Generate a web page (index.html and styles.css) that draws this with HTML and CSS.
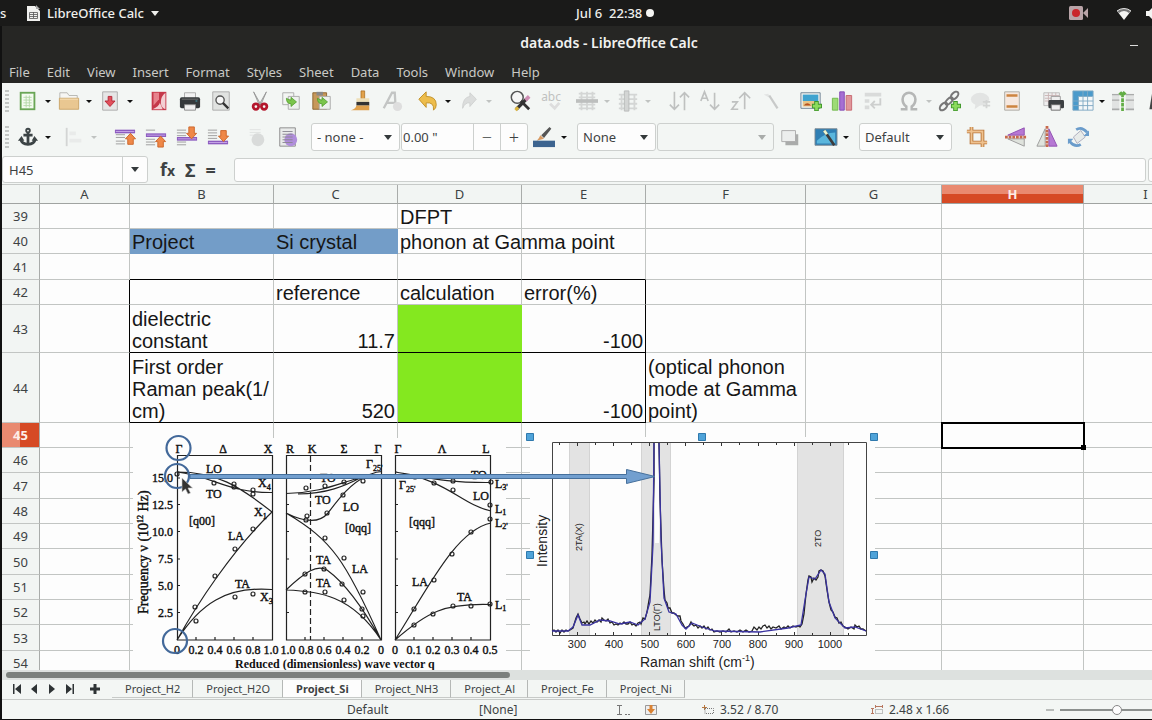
FILE: index.html
```html
<!DOCTYPE html>
<html lang="en">
<head>
<meta charset="utf-8">
<title>data.ods - LibreOffice Calc</title>
<link rel="stylesheet" href="styles.css">
</head>
<body>
<header class="topbar">
  <div class="topbar-left">
    <span class="activities">s</span>
    <button class="app-menu">
      <svg width="13" height="16" viewBox="0 0 13 16"><path d="M0 1h8l5 5v10H0z" fill="#f1f1ef"/><path d="M9 0l4 4h-4z" fill="#aaa"/><path d="M2.500 7.500h8v6h-8zM2.500 9.500h8M2.500 11.500h8M6.500 7v6" fill="none" stroke="#555" stroke-width=".8"/></svg>
      <span>LibreOffice Calc</span><i class="caret caret-light"></i>
    </button>
  </div>
  <button class="clock"><span>Jul 6&nbsp; 22:38</span><i class="dot"></i></button>
  <div class="tray">
    <svg class="cam" width="20" height="14" viewBox="0 0 20 14"><rect width="14" height="14" rx="1.500" fill="#b9a4a8"/><path d="M14 7l5-5v10z" fill="#b9a4a8"/><circle cx="7" cy="7" r="4" fill="#c9252b"/></svg>
    <svg width="16" height="13" viewBox="0 0 16 13"><path d="M8 13L1 4a11 11 0 0 1 14 0z" fill="#f4f4f2"/><path d="M1 4a11 11 0 0 1 14 0l-2 2a8 8 0 0 0-10 0z" fill="#777"/><path d="M1 4a11 11 0 0 1 14 0" fill="none" stroke="#ddd"/></svg>
    <svg width="16" height="13" viewBox="0 0 16 13"><path d="M0 4h3l4-4v13l-4-4H0z" fill="#f4f4f2"/><path d="M9 4q2 2.500 0 5M11 2q4 4.500 0 9" fill="none" stroke="#999"/></svg>
  </div>
</header>

<div class="window">
<div class="titlebar"><h1>data.ods - LibreOffice Calc</h1><button class="minimize" aria-label="Minimize"></button></div>
<nav class="menubar">
  <button>File</button><button>Edit</button><button>View</button><button>Insert</button><button>Format</button><button>Styles</button><button>Sheet</button><button>Data</button><button>Tools</button><button>Window</button><button>Help</button>
</nav>

<div class="toolbar">
  <i class="grip"></i>
  <div class="group first">
    <button class="tool" aria-label="New"><svg viewBox="0 0 24 24"><path d="M3 2h17v20H3z" fill="#6aa656"/><path d="M5 4h13v16H5z" fill="#f4fbf0"/><path d="M7 8h9M7 11h9M7 14h9M7 17h9M10 6v13M13.500 6v13" stroke="#b5d8a8"/></svg></button><button class="drop" aria-label="New options"></button>
    <button class="tool" aria-label="Open"><svg viewBox="0 0 24 24"><path d="M2 3h8l2 3h9v5H2z" fill="#f6f6f4" stroke="#b5b5b0"/><path d="M1.500 9h21v12h-21z" fill="#e9c791" stroke="#c9a468"/><path d="M2 10h20" stroke="#f7e1bb"/></svg></button><button class="drop" aria-label="Open options"></button>
    <button class="tool" aria-label="Save"><svg viewBox="0 0 24 24"><path d="M4 2h16v20H4z" fill="#e6e6e6" stroke="#aaa"/><path d="M10 7h4v5h3.500L12 18l-5.500-6H10z" fill="#e2505c" stroke="#b52737"/></svg></button><button class="drop" aria-label="Save options"></button>
  </div>
  <div class="group">
    <button class="tool" aria-label="Export as PDF"><svg viewBox="0 0 24 24"><path d="M4 2h16v20H4z" fill="#c5384a"/><path d="M6 3h6v7l-6 7z" fill="#e7828c"/><path d="M19 3v18q-5-2-5-8 0-6 5-10zM5 21q7-3 8-7l3 7z" fill="#f3cfd3"/></svg></button>
    <button class="tool" aria-label="Print"><svg viewBox="0 0 24 24"><path d="M6 3h12v8H6z" fill="#f2f2f2" stroke="#aaa"/><rect x="1" y="8" width="22" height="12" rx="2" fill="#34383a"/><path d="M3 10h18" stroke="#777"/><path d="M6 16h12v6H6z" fill="#eee" stroke="#888"/><path d="M18 12h2" stroke="#4ab"/></svg></button>
    <button class="tool" aria-label="Print Preview"><svg viewBox="0 0 24 24"><path d="M3 2h18v20H3z" fill="#e1e3e1" stroke="#aaa"/><circle cx="11" cy="11" r="4.500" fill="#f7f7f7" stroke="#555" stroke-width="1.500"/><path d="M14 14l6 6" stroke="#333" stroke-width="2.500"/></svg></button>
  </div>
  <div class="group">
    <button class="tool" aria-label="Cut"><svg viewBox="0 0 24 24"><path d="M5 2l8 14h-2zM19 2l-8 14h2z" fill="#d3d6d4" stroke="#888" stroke-width=".8"/><circle cx="7.500" cy="18" r="3" fill="none" stroke="#b4162c" stroke-width="3"/><circle cx="16.500" cy="18" r="3" fill="none" stroke="#b4162c" stroke-width="3"/></svg></button>
    <button class="tool" aria-label="Copy"><svg viewBox="0 0 24 24"><path d="M3 3h12v13H3z" fill="#f3f5f3" stroke="#aaa"/><path d="M9 7h12v14H9z" fill="#eef1ee" stroke="#aaa"/><path d="M7 9q0 6 5 6v3l6-5-6-5v3q-2 0-5-2z" fill="#7bc54c" stroke="#4c9a28" stroke-width=".8"/></svg></button>
    <button class="tool" aria-label="Paste"><svg viewBox="0 0 24 24"><path d="M2 3h15v18H2z" fill="#c7985a" stroke="#8a632d"/><path d="M6 2h7v4H6z" fill="#888"/><path d="M9 7h12v14H9z" fill="#eef1ee" stroke="#aaa"/><path d="M7 9q0 6 5 6v3l6-5-6-5v3q-2 0-5-2z" fill="#7bc54c" stroke="#4c9a28" stroke-width=".8"/></svg></button>
  </div>
  <div class="group">
    <button class="tool" aria-label="Clone Formatting"><svg viewBox="0 0 24 24"><path d="M12 1h4v9h-4z" fill="#e2a24b" stroke="#a76b1d" stroke-width=".8"/><path d="M7 9h14v4H7z" fill="#eedfb8"/><path d="M7 13h14v4H7z" fill="#333"/><path d="M7 17h14v5H1q5-1 6-5z" fill="#dfa04c"/></svg></button>
    <button class="tool" aria-label="Clear Direct Formatting" disabled><svg viewBox="0 0 24 24"><path d="M3 20L12 3h3l1 17M7 14h9" fill="none" stroke="#c3c5c4" stroke-width="2.500"/><circle cx="18" cy="18" r="5" fill="#dedede"/></svg></button>
  </div>
  <div class="group near">
    <button class="tool" aria-label="Undo"><svg viewBox="0 0 24 24"><path d="M2 10l8-8v5q11 0 11 9 0 4-3 6 1-9-8-8v5z" fill="#edbd4c" stroke="#c08e24"/></svg></button><button class="drop" aria-label="Undo options"></button>
    <button class="tool" aria-label="Redo" disabled><svg viewBox="0 0 24 24"><path d="M20 10l-7-7v4Q5 8 5 20q3-7 8-6v4z" fill="#dbdddc" stroke="#cfd1d0"/></svg></button><button class="drop off" aria-label="Redo options"></button>
  </div>
  <div class="group far">
    <button class="tool" aria-label="Find and Replace"><svg viewBox="0 0 24 24"><circle cx="9" cy="8" r="6.500" fill="#f6f6f6" stroke="#555" stroke-width="1.600"/><path d="M13 12l9 9" stroke="#333" stroke-width="3"/><path d="M8 21L19 10" stroke="#333" stroke-width="3.500"/><path d="M18 11l4-4" stroke="#cf8fb5" stroke-width="4"/><path d="M7 22l3-3" stroke="#dcb43c" stroke-width="3.500"/></svg></button>
    <button class="tool" aria-label="Spelling" disabled><svg viewBox="0 0 24 24"><text class="abc" x="12" y="12" text-anchor="middle">abc</text><path d="M11 15l5 5 5-6" fill="none" stroke="#ddd" stroke-width="3"/></svg></button>
  </div>
  <div class="group near">
    <button class="tool" aria-label="Row" disabled><svg viewBox="0 0 24 24"><path d="M3 4h18M3 8h18M3 16h18M3 20h18M6 2v20M12 2v20M18 2v20" stroke="#d4d6d5" stroke-width="2"/><path d="M0 10h24v4H0z" fill="#bdbfbe"/></svg></button><button class="drop off" aria-label="Row options"></button>
    <button class="tool" aria-label="Column" disabled><svg viewBox="0 0 24 24"><path d="M2 5h20M2 10h20M2 15h20M2 20h20M5 4v18M19 4v18" stroke="#d4d6d5" stroke-width="2"/><path d="M8 1h5v22H8z" fill="#d3d5d4" stroke="#b8bab9"/></svg></button><button class="drop off" aria-label="Column options"></button>
  </div>
  <div class="group far">
    <button class="tool" aria-label="Sort" disabled><svg viewBox="0 0 24 24"><path d="M7 2v19M2 16l5 5 5-5M18 22V3M13 8l5-5 5 5" fill="none" stroke="#bfc1c0" stroke-width="1.800"/></svg></button>
    <button class="tool" aria-label="Sort Ascending" disabled><svg viewBox="0 0 24 24"><path d="M2 12l4-10 4 10M3 9h6M17 3v18M12 16l5 5 5-5" fill="none" stroke="#bfc1c0" stroke-width="1.800"/></svg></button>
    <button class="tool" aria-label="Sort Descending" disabled><svg viewBox="0 0 24 24"><path d="M2 13h6l-6 8h7M16 21V3M10 9l6-6 6 6" fill="none" stroke="#bfc1c0" stroke-width="1.800"/></svg></button>
    <button class="tool" aria-label="AutoFilter" disabled><svg viewBox="0 0 24 24"><path d="M3 5l5-1 2 5z" fill="#e3e5e4"/><path d="M9 6l9 14" stroke="#c8cac9" stroke-width="2.500"/></svg></button>
  </div>
  <div class="group">
    <button class="tool" aria-label="Image"><svg viewBox="0 0 24 24"><path d="M1 3h21v17H1z" fill="#f3f3ef" stroke="#6a7f92"/><path d="M3 5h17v7H3z" fill="#3fa3cf"/><path d="M3 12h17v6H3z" fill="#e6c387"/><path d="M4 17q4-5 8 0z" fill="#b6521f"/><path d="M18 12v11M13 17.500h11" stroke="#3f962b" stroke-width="5"/><path d="M18 13v9M14 17.500h9" stroke="#8bdb5c" stroke-width="3"/></svg></button>
    <button class="tool" aria-label="Chart"><svg viewBox="0 0 24 24"><path d="M1.500 9h6v13h-6z" fill="#9ddb76" stroke="#6fb849"/><path d="M9.500 2h5v20h-5z" fill="#a66fd3" stroke="#8148b4"/><path d="M16.500 6h6v16h-6z" fill="#e0969a" stroke="#c6666f"/></svg></button>
    <button class="tool" aria-label="Pivot Table" disabled><svg viewBox="0 0 24 24"><path d="M3 3h18v4H3zM3 10h5v4H3zM3 17h5v4H3z" fill="#d9dbda"/><path d="M20 9v7h-9M14 12l-4 4 4 4" fill="none" stroke="#cdcfce" stroke-width="2"/></svg></button>
  </div>
  <div class="group near">
    <button class="tool" aria-label="Special Character"><svg viewBox="0 0 24 24"><path d="M3 21h6v-3q-4-3-4-8a7 7 0 0 1 14 0q0 5-4 8v3h6" fill="none" stroke="#b5b7b6" stroke-width="2.800"/></svg></button><button class="drop off" aria-label="Special Character options"></button>
    <button class="tool" aria-label="Hyperlink"><svg viewBox="0 0 24 24"><g fill="none" stroke="#777" stroke-width="2.200"><ellipse cx="17" cy="6" rx="5" ry="3" transform="rotate(-45 17 6)"/><ellipse cx="11" cy="12" rx="5" ry="2.500" transform="rotate(-45 11 12)"/><ellipse cx="5" cy="18" rx="5" ry="3" transform="rotate(-45 5 18)"/></g><path d="M18 12v11M13 17.500h11" stroke="#3f962b" stroke-width="5"/><path d="M18 13v9M14 17.500h9" stroke="#8bdb5c" stroke-width="3"/></svg></button>
    <button class="tool" aria-label="Comment" disabled><svg viewBox="0 0 24 24"><ellipse cx="11" cy="10" rx="10" ry="7" fill="#e2e4e3"/><path d="M6 15l-1 6 7-5z" fill="#e2e4e3"/><path d="M14 13h8M14 17h8M18 11v9" stroke="#d3d5d4" stroke-width="2"/></svg></button>
    <button class="tool" aria-label="Headers and Footers"><svg viewBox="0 0 24 24"><path d="M4 2h16v20H4z" fill="#f6e8df" stroke="#a8a8a2"/><path d="M6 6h12M6 18h12" stroke="#cd8440" stroke-width="2.500"/></svg></button>
  </div>
  <div class="group far">
    <button class="tool" aria-label="Define Print Area"><svg viewBox="0 0 24 24"><path d="M2 3h17v14H2z" fill="#eee" stroke="#bbb"/><path d="M3 6h16M3 9h16M3 12h16M7 3v14M11 3v14M15 3v14" stroke="#c9b5b5"/><path d="M10 7h10v6H10z" fill="#eee" stroke="#999"/><rect x="7" y="11" width="17" height="9" rx="1.500" fill="#3c4042"/><path d="M10 16h10v6H10z" fill="#eee" stroke="#666"/></svg></button>
    <button class="tool slim" aria-label="Freeze Rows and Columns"><svg viewBox="0 0 24 24"><path d="M1 1h22v21H1z" fill="#f4f7f9"/><path d="M1 1h22v6H7v15H1z" fill="#4a9acb"/><path d="M1 12h22M1 17h22M12 1v21M17 1v21M1 1h22v21H1zM7 7h15M7 7v15" fill="none" stroke="#7fa8c3"/></svg></button><button class="drop" aria-label="Freeze options"></button>
    <button class="tool" aria-label="Split Window"><svg viewBox="0 0 24 24"><path d="M0 4h8v19H0zM15 4h9v19h-9z" fill="#e1e3e2"/><path d="M0 5h8M0 11h8M0 21h8M15 5h9M15 11h9M15 21h9" stroke="#aaacab" stroke-width="1.500"/><path d="M11.500 23V4M8 5l3.500-3L15 5" fill="none" stroke="#62ad45" stroke-width="3" stroke-dasharray="4 1"/></svg></button>
    <button class="tool" aria-label="Draw Functions"><svg viewBox="0 0 24 24"><path d="M7 21L10 3h9v18z" fill="#444"/></svg></button>
  </div>
</div>

<div class="toolbar">
  <i class="grip"></i>
  <div class="group first">
    <button class="tool" aria-label="Anchor"><svg viewBox="0 0 24 24"><circle cx="12" cy="5" r="2" fill="none" stroke="#3c4446" stroke-width="2"/><path d="M12 7v14M7 10h10M4 14q1 6 8 6t8-6" fill="none" stroke="#3c4446" stroke-width="3"/><path d="M1 16l4-5 3 5zM16 16l3-5 4 5z" fill="#3c4446"/></svg></button><button class="drop" aria-label="Anchor options"></button>
  </div>
  <div class="group near">
    <button class="tool" aria-label="Align" disabled><svg viewBox="0 0 24 24"><path d="M4 2v20" stroke="#d3d5d4" stroke-width="2"/><path d="M7 6h7v4H7zM7 14h13v4H7z" fill="#e9ebea"/></svg></button><button class="drop off" aria-label="Align options"></button>
  </div>
  <div class="group far">
    <button class="tool" aria-label="Bring to Front"><svg viewBox="0 0 24 24"><path d="M2 9.500h10M2 12.500h10M2 16.500h10M2 19.500h10" stroke="#999"/><path d="M1 4h22v4H1z" fill="#8c5cc0"/><path d="M2 6h20" stroke="#c9a9e8"/><path d="M18 8l5.500 6H21v6h-6v-6h-2.500z" fill="#ef8848" stroke="#cc6528"/></svg></button>
    <button class="tool" aria-label="Forward One"><svg viewBox="0 0 24 24"><path d="M1 4.500h10M1 14.500h10M1 17.500h10M1 20.500h10" stroke="#999"/><path d="M1 8h22v4H1z" fill="#8c5cc0"/><path d="M2 10h20" stroke="#c9a9e8"/><path d="M17 11l5.500 6H20v6h-6v-6h-2.500z" fill="#ef8848" stroke="#cc6528"/></svg></button>
    <button class="tool" aria-label="Back One"><svg viewBox="0 0 24 24"><path d="M1 4.500h10M1 7.500h10M1 10.500h10M1 17.500h10M1 20.500h10" stroke="#999"/><path d="M1 12h22v4H1z" fill="#8c5cc0"/><path d="M2 14h20" stroke="#c9a9e8"/><path d="M17 14l5.500-6H20V1h-6v7h-2.500z" fill="#ef8848" stroke="#cc6528"/></svg></button>
    <button class="tool" aria-label="Send to Back"><svg viewBox="0 0 24 24"><path d="M1 4.500h10M1 7.500h10M1 10.500h10M1 13.500h10" stroke="#999"/><path d="M1 16h22v4H1z" fill="#8c5cc0"/><path d="M2 18h20" stroke="#c9a9e8"/><path d="M18 17l5.500-6H21V5h-6v6h-2.500z" fill="#ef8848" stroke="#cc6528"/></svg></button>
  </div>
  <div class="group">
    <button class="tool" aria-label="To Foreground" disabled><svg viewBox="0 0 24 24"><path d="M4 4h12M4 7h12M4 10h12" stroke="#dfe1e0"/><circle cx="13" cy="15" r="7" fill="#d9dbda"/></svg></button>
    <button class="tool" aria-label="To Background"><svg viewBox="0 0 24 24"><path d="M3 2h17v20H3z" fill="#e9ebea" stroke="#888"/><circle cx="15" cy="15" r="7" fill="#b08edb"/><path d="M6 6h11M6 9h11M6 12h11M6 15h11M6 18h11" stroke="#8a8690"/></svg></button>
  </div>
  <div class="select gap-select w-line"><select aria-label="Line Style"><option>- none -</option></select></div>
  <div class="spin"><input type="text" value="0.00 &quot;" aria-label="Line Width"><button aria-label="Decrease">−</button><button aria-label="Increase">+</button></div>
  <div class="group flush">
    <button class="tool" aria-label="Line Color"><svg viewBox="0 0 24 24"><path d="M9 10l9-9 2 2-8 10z" fill="#555"/><path d="M8 10l4 4-8 2q3-3 4-6z" fill="#d79a63"/><path d="M0 16h24v7H0z" fill="#3c648f"/></svg></button><button class="drop" aria-label="Line Color options"></button>
  </div>
  <div class="select gap-select w-area"><select aria-label="Area Style"><option>None</option></select></div>
  <div class="select dim w-fill"><select aria-label="Fill" disabled><option></option></select></div>
  <div class="group flush">
    <button class="tool" aria-label="Shadow"><svg viewBox="0 0 24 24"><path d="M7 9h14v12H7z" fill="#aaacab"/><path d="M3 5h15v12H3z" fill="#eceeed" stroke="#aaa"/></svg></button>
  </div>
  <div class="group near">
    <button class="tool" aria-label="Filter"><svg viewBox="0 0 24 24"><path d="M0 3h24v18H0z" fill="#2f7fb4" stroke="#7c8890"/><path d="M2 16q9-9 20-9v12H2z" fill="#5ab6dc"/><path d="M10 5l11 16" stroke="#3b3b3b" stroke-width="3"/><path d="M10 5l3 4" stroke="#eef7d0" stroke-width="3"/></svg></button><button class="drop" aria-label="Filter options"></button>
  </div>
  <div class="select gap-select w-mode"><select aria-label="Image Mode"><option>Default</option></select></div>
  <div class="group">
    <button class="tool" aria-label="Crop"><svg viewBox="0 0 24 24"><path d="M6 1v17h17M1 6h17v17" fill="none" stroke="#b87538" stroke-width="4"/><path d="M6 1v17h17M1 6h17v17" fill="none" stroke="#efc28f" stroke-width="2"/></svg></button>
  </div>
  <div class="group">
    <button class="tool" aria-label="Flip Vertically"><svg viewBox="0 0 24 24"><path d="M3 10L21 2v8z" fill="#b678d4" stroke="#8e4eb0"/><path d="M3 14l18 8v-8z" fill="#dfe3dd" stroke="#999"/><path d="M0 12h24" stroke="#c76a4c" stroke-width="3" stroke-dasharray="3 1"/></svg></button>
    <button class="tool" aria-label="Flip Horizontally"><svg viewBox="0 0 24 24"><path d="M10 3v19H1z" fill="#dfe3dd" stroke="#999"/><path d="M14 3v19h9z" fill="#b678d4" stroke="#8e4eb0"/><path d="M12 0v24" stroke="#c76a4c" stroke-width="3" stroke-dasharray="3 1"/></svg></button>
    <button class="tool" aria-label="Rotate"><svg viewBox="0 0 24 24"><path d="M7 12L15 5l5 7-9 7z" fill="#e8ebe9" stroke="#aab"/><path d="M10 4q6-4 12 3M15 20q-6 4-12-3" fill="none" stroke="#6a9ccb" stroke-width="3"/><path d="M18 11h6V5zM7 14H1v6z" fill="#6a9ccb"/></svg></button>
  </div>
</div>

<div class="formulabar">
  <div class="namebox"><input type="text" value="H45" aria-label="Name Box"><button aria-label="Name list"><i class="caret"></i></button></div>
  <div class="fx"><button aria-label="Function Wizard">f<small>x</small></button><button aria-label="Select Function">Σ</button><button aria-label="Formula">=</button></div>
  <input class="formula" type="text" aria-label="Formula input">
  <button class="expand" aria-label="Expand formula bar"></button>
</div>

<main class="sheet">
<table>
  <colgroup><col class="c-head"><col class="c-a"><col class="c-b"><col class="c-c"><col class="c-d"><col class="c-e"><col class="c-f"><col class="c-g"><col class="c-h"><col class="c-i"></colgroup>
  <thead><tr><th></th><th>A</th><th>B</th><th>C</th><th>D</th><th>E</th><th>F</th><th>G</th><th class="current">H</th><th>I</th></tr></thead>
  <tbody>
  <tr><th>39</th><td></td><td></td><td></td><td>DFPT</td><td></td><td></td><td></td><td></td><td></td></tr>
  <tr><th>40</th><td></td><td class="blue">Project</td><td class="blue">Si crystal</td><td class="spill">phonon at Gamma point</td><td></td><td></td><td></td><td></td><td></td></tr>
  <tr class="plus"><th>41</th><td></td><td class="kb"></td><td class="kb"></td><td class="kb"></td><td class="kb"></td><td></td><td></td><td></td><td></td></tr>
  <tr><th>42</th><td class="kr"></td><td></td><td>reference</td><td>calculation</td><td class="kr">error(%)</td><td></td><td></td><td></td><td></td></tr>
  <tr class="two"><th>43</th><td class="kr"></td><td class="kb">dielectric constant</td><td class="kb num">11.7</td><td class="kb green"></td><td class="kb kr num">-100</td><td></td><td></td><td></td><td></td></tr>
  <tr class="three"><th>44</th><td class="kr"></td><td class="kb">First order Raman peak(1/<wbr>cm)</td><td class="kb num">520</td><td class="kb green"></td><td class="kb kr num">-100</td><td>(optical phonon mode at Gamma point)</td><td></td><td></td><td></td></tr>
  <tr><th class="current">45</th><td></td><td></td><td></td><td></td><td></td><td></td><td></td><td class="selected"></td><td></td></tr>
  <tr><th>46</th><td></td><td></td><td></td><td></td><td></td><td></td><td></td><td></td><td></td></tr>
  <tr class="plus"><th>47</th><td></td><td></td><td></td><td></td><td></td><td></td><td></td><td></td><td></td></tr>
  <tr><th>48</th><td></td><td></td><td></td><td></td><td></td><td></td><td></td><td></td><td></td></tr>
  <tr><th>49</th><td></td><td></td><td></td><td></td><td></td><td></td><td></td><td></td><td></td></tr>
  <tr class="plus"><th>50</th><td></td><td></td><td></td><td></td><td></td><td></td><td></td><td></td><td></td></tr>
  <tr><th>51</th><td></td><td></td><td></td><td></td><td></td><td></td><td></td><td></td><td></td></tr>
  <tr><th>52</th><td></td><td></td><td></td><td></td><td></td><td></td><td></td><td></td><td></td></tr>
  <tr class="plus"><th>53</th><td></td><td></td><td></td><td></td><td></td><td></td><td></td><td></td><td></td></tr>
  <tr><th>54</th><td></td><td></td><td></td><td></td><td></td><td></td><td></td><td></td><td></td></tr>
  </tbody>
</table>
<svg class="drawings" width="760" height="250" viewBox="132 430 760 250">
  <path d="M133 438h373v242H133zM530 437h345v243H530z" fill="#fdfdfd"/>
  <g class="axes">
    <path d="M177.500 455.500h95V640h-95zM286.500 455.500h95V640h-95zM395.500 455.500h95V640h-95z"/>
    <path d="M310.500 456V640" stroke-dasharray="6 3"/>
    <path d="M177 478h3M177 504.500h3M177 531.500h3M177 559h3M177 585.500h3M177 612.500h3M286 504.500h3M286 531.500h3M286 559h3M286 612.500h3M395 504.500h3M395 531.500h3M395 559h3M395 585.500h3M395 612.500h3M196 640v-3M215 640v-3M234 640v-3M253 640v-3M305 640v-3M324 640v-3M343 640v-3M362 640v-3M414 640v-3M433 640v-3M452 640v-3M471 640v-3"/>
    <path d="M177 640C196 606 232 550 272 512M177 640C200 604 226 586 272 589.500M177 472C216 472 238 485 272 512M177 472C212 476 228 493 272 492.500"/>
    <path d="M286 493.500C320 493 340 483 356 479S372 472 382 471.500M298 494C326 494 345 486 362 477M286 513C302 521 318 525 328 513C340 497 350 484 368 475M286 513C332 540 346 561 381 640M286 590C305 572 317 564 327 570C345 583 362 606 381 640M286 590C318 591 352 595 381 640"/>
    <path d="M395 472C424 476 440 483 491 482.500M395 472C448 480 460 504 491 511M395 640C428 588 456 530 491 523M395 640C427 612 444 603 491 604.500"/>
  </g>
  <g class="points">
    <circle cx="177" cy="474" r="2"/><circle cx="214" cy="483" r="2"/><circle cx="234" cy="484" r="2"/><circle cx="234" cy="487" r="2"/><circle cx="253" cy="490" r="2"/><circle cx="253" cy="494" r="2"/><circle cx="253" cy="529" r="2"/><circle cx="235" cy="549" r="2"/><circle cx="215" cy="576" r="2"/><circle cx="195" cy="607" r="2"/><circle cx="196" cy="621" r="2"/><circle cx="235" cy="597" r="2"/><circle cx="253" cy="594" r="2"/>
    <circle cx="306" cy="488" r="2"/><circle cx="325" cy="486" r="2"/><circle cx="344" cy="482" r="2"/><circle cx="363" cy="481" r="2"/><circle cx="343" cy="495" r="2"/><circle cx="327" cy="513" r="2"/><circle cx="307" cy="516" r="2"/><circle cx="306" cy="520" r="2"/><circle cx="325" cy="538" r="2"/><circle cx="344" cy="558" r="2"/><circle cx="363" cy="592" r="2"/><circle cx="305" cy="574" r="2"/><circle cx="324" cy="569" r="2"/><circle cx="342" cy="584" r="2"/><circle cx="362" cy="609" r="2"/><circle cx="305" cy="592" r="2"/><circle cx="325" cy="592" r="2"/><circle cx="344" cy="600" r="2"/><circle cx="363" cy="616" r="2"/>
    <circle cx="415" cy="477" r="2"/><circle cx="434" cy="483" r="2"/><circle cx="453" cy="481" r="2"/><circle cx="491" cy="482" r="2"/><circle cx="453" cy="490" r="2"/><circle cx="490" cy="505" r="2"/><circle cx="490" cy="519" r="2"/><circle cx="471" cy="532" r="2"/><circle cx="452" cy="554" r="2"/><circle cx="434" cy="580" r="2"/><circle cx="414" cy="609" r="2"/><circle cx="414" cy="625" r="2"/><circle cx="433" cy="614" r="2"/><circle cx="453" cy="606" r="2"/><circle cx="471" cy="606" r="2"/><circle cx="490" cy="604" r="2"/>
  </g>
  <g class="paper">
    <g text-anchor="middle"><text x="179" y="453">Γ</text><text x="223" y="453">Δ</text><text x="268" y="453">X</text><text x="290" y="453">R</text><text x="312" y="453">K</text><text x="344" y="453">Σ</text><text x="378" y="453">Γ</text><text x="398" y="453">Γ</text><text x="442" y="453">Λ</text><text x="486" y="453">L</text>
    <text x="177" y="654">0</text><text x="196" y="654">0.2</text><text x="215" y="654">0.4</text><text x="234" y="654">0.6</text><text x="253" y="654">0.8</text><text x="271" y="654">1.0</text><text x="288" y="654">1.0</text><text x="306" y="654">0.8</text><text x="324" y="654">0.6</text><text x="343" y="654">0.4</text><text x="362" y="654">0.2</text><text x="381" y="654">0</text><text x="395" y="654">0</text><text x="414" y="654">0.1</text><text x="433" y="654">0.2</text><text x="452" y="654">0.3</text><text x="471" y="654">0.4</text><text x="490" y="654">0.5</text></g>
    <g text-anchor="end"><text x="173" y="482">15.0</text><text x="173" y="509">12.5</text><text x="173" y="536">10.0</text><text x="173" y="563">7.5</text><text x="173" y="590">5.0</text><text x="173" y="617">2.5</text></g>
    <text x="206" y="473">LO</text><text x="206" y="498">TO</text><text x="189" y="525">[q00]</text><text x="228" y="540">LA</text><text x="235" y="588">TA</text><text x="258" y="487">X<tspan class="sub" dy="3">4</tspan></text><text x="254" y="516">X<tspan class="sub" dy="3">1</tspan></text><text x="260" y="601">X<tspan class="sub" dy="3">3</tspan></text>
    <text x="320" y="482">TO</text><text x="315" y="504">TO</text><text x="343" y="511">LO</text><text x="345" y="532">[0qq]</text><text x="352" y="573">LA</text><text x="316" y="564">TA</text><text x="316" y="587">TA</text><text x="366" y="468">Γ<tspan class="sub" dy="3">25'</tspan></text>
    <text x="399" y="489">Γ<tspan class="sub" dy="3">25'</tspan></text><text x="471" y="479">TO</text><text x="473" y="500">LO</text><text x="409" y="526">[qqq]</text><text x="412" y="586">LA</text><text x="457" y="601">TA</text><text x="495" y="488">L<tspan class="sub" dy="2">3'</tspan></text><text x="495" y="513">L<tspan class="sub" dy="2">1</tspan></text><text x="495" y="527">L<tspan class="sub" dy="2">2'</tspan></text><text x="495" y="609">L<tspan class="sub" dy="2">1</tspan></text>
    <text class="freq" transform="translate(148 614) rotate(-90)">Frequency ν (10<tspan class="sub" dy="-5">12</tspan><tspan dy="5"> Hz)</tspan></text>
    <text class="wave" x="235" y="668">Reduced (dimensionless) wave vector q</text>
  </g>
  <path d="M569 443h21v192h-21zM642 443h29v192h-29zM797 443h47v192h-47z" fill="#e3e3e3"/>
  <path d="M569.500 443v192M589.500 443v192M641.500 443v192M670.500 443v192M797.500 443v192M843.500 443v192" stroke="#d3d3d3"/>
  <path d="M655 443h4l1 60-1 40h-4z" fill="#fdfdfd"/>
  <path d="M552.500 442.500h314v193h-314z" fill="none" stroke="#444"/>
  <path d="M577.500 635v-3M613.500 635v-3M649.500 635v-3M685.500 635v-3M721.500 635v-3M758.500 635v-3M794.500 635v-3M830.500 635v-3M559.500 635v-2M595.500 635v-2M631.500 635v-2M667.500 635v-2M703.500 635v-2M739.500 635v-2M776.500 635v-2M812.500 635v-2M848.500 635v-2M577.500 443v3M613.500 443v3M649.500 443v3M685.500 443v3M721.500 443v3M758.500 443v3M794.500 443v3M830.500 443v3M559.500 443v2M595.500 443v2M631.500 443v2M667.500 443v2M703.500 443v2M739.500 443v2M776.500 443v2M812.500 443v2M848.500 443v2" stroke="#333"/>
  <polyline class="measured" points="552,631 554,630 556,632 558,630 560,633 562,630 564,632 566,630 568,631 570,630 573,628 576,618 578,614 580,619 582,623 584,622 585,624 587,621 589,624 591,621 593,623 595,620 597,622 599,620 601,622 602,618 604,620 606,621 608,619 610,623 612,622 614,625 616,624 618,625 620,623 622,624 624,622 626,624 628,624 630,622 632,625 634,624 636,626 638,623 640,622 641,624 643,618 645,619 647,612 649,600 650,595 652,555 654,480 654,443"/>
  <polyline class="measured" points="659,443 660,500 662,560 664,590 665,600 667,603 668,608 670,608 672,613 674,613 676,615 678,616 680,616 681,621 683,624 685,628 687,627 689,626 691,622 692,624 694,626 696,625 698,628 700,626 702,628 704,626 706,629 708,627 710,630 712,629 714,632 717,631 720,632 723,631 726,632 729,629 731,632 734,631 737,632 740,630 743,632 746,630 749,632 752,631 754,627 757,630 759,627 761,629 763,626 765,625 767,628 769,626 771,629 773,627 776,628 779,626 781,629 784,627 786,628 788,626 790,628 793,626 796,627 798,626 800,627 802,624 804,614 806,594 808,580 809,576 811,577 812,582 814,578 816,580 818,577 819,571 821,570 823,571 825,576 827,590 829,602 831,610 833,612 835,617 837,618 839,623 841,622 843,626 845,627 848,629 851,627 854,629 855,625 857,627 859,626 861,629 863,629 866,631"/>
  <polyline class="fitted" points="552,631 568,631 573,627 578,615 582,625 590,625 600,620 610,621 620,624 630,622 638,625 645,619 650,602 653,545 654,443"/>
  <polyline class="fitted" points="659,443 661,540 664,598 669,612 676,614 682,625 686,629 692,623 702,627 715,631 760,632 788,628 801,625 805,600 809,577 815,579 821,570 825,574 829,602 835,618 845,628 855,627 866,631"/>
  <g class="plot">
    <g text-anchor="middle"><text x="577" y="648">300</text><text x="614" y="648">400</text><text x="650" y="648">500</text><text x="686" y="648">600</text><text x="722" y="648">700</text><text x="758" y="648">800</text><text x="794" y="648">900</text><text x="830" y="648">1000</text></g>
    <text class="axis-title" x="640" y="667">Raman shift (cm<tspan class="sup" dy="-6">-1</tspan><tspan dy="6">)</tspan></text>
    <text class="axis-title" transform="translate(547 567) rotate(-90)">Intensity</text>
    <text class="band" transform="translate(582 551) rotate(-90)">2TA(X)</text><text class="band" transform="translate(660 631) rotate(-90)">LTO(Γ)</text><text class="band" transform="translate(821 547) rotate(-90)">2TO</text>
  </g>
  <path d="M190 474.500h436.500v-5l28.500 7-28.500 7v-5H190z" fill="#729fcf" stroke="#46709c"/>
  <g fill="none" stroke="#43699a" stroke-width="2.200"><circle cx="178.500" cy="448" r="12"/><circle cx="177" cy="476" r="12"/><circle cx="175" cy="641" r="12"/></g>
  <path d="M182 478v14l3.500-3 2.500 5 2.500-1-2.500-5h4.500z" fill="#333" stroke="#ccc" stroke-width=".6"/>
  <path class="handles" d="M526.500 433.500h7v7h-7zM698.500 433.500h7v7h-7zM870.500 433.500h7v7h-7zM526.500 551.500h7v7h-7zM870.500 551.500h7v7h-7z"/>
</svg>
</main>

<div class="hscroll"><i></i></div>
<div class="tabs">
  <div class="tab-nav">
    <button aria-label="First sheet"><svg viewBox="0 0 10 10"><path d="M1 0h1.500v10H1zM9 0v10L3 5z"/></svg></button>
    <button aria-label="Previous sheet"><svg viewBox="0 0 10 10"><path d="M8 0v10L2 5z"/></svg></button>
    <button aria-label="Next sheet"><svg viewBox="0 0 10 10"><path d="M2 0v10l6-5z"/></svg></button>
    <button aria-label="Last sheet"><svg viewBox="0 0 10 10"><path d="M1 0v10l6-5zM7.500 0H9v10H7.500z"/></svg></button>
    <button class="add" aria-label="Add sheet"><svg viewBox="0 0 10 10"><path d="M3.500 0h3v3.500H10v3H6.500V10h-3V6.500H0v-3h3.500z"/></svg></button>
  </div>
  <button class="tab">Project_H2</button><button class="tab">Project_H2O</button><button class="tab active">Project_Si</button><button class="tab">Project_NH3</button><button class="tab">Project_Al</button><button class="tab">Project_Fe</button><button class="tab">Project_Ni</button>
</div>
<footer class="status">
  <span class="s-style">Default</span>
  <span class="s-lang">[None]</span>
  <span class="s-mode"><svg width="14" height="10" viewBox="0 0 14 10"><path d="M0 .500h5M2.500 0v9M0 9.500h5M8 9.500h2M11 9.500h2" stroke="#777"/></svg>
  <svg width="12" height="10" viewBox="0 0 12 10"><path d="M.5.500h11v9H.5z" fill="#eee" stroke="#999"/><path d="M4.500 0h3v4H10L6 9 2 4h2.500z" fill="#d98232"/></svg></span>
  <span class="s-pos"><svg width="12" height="10" viewBox="0 0 12 10"><path d="M0 2.500h5M2.500 0v5" stroke="#b87840"/><path d="M3 3.500h8.500v5H3z" fill="none" stroke="#777" stroke-dasharray="1 1"/></svg>3.52 / 8.70</span>
  <span class="s-size"><svg width="12" height="10" viewBox="0 0 12 10"><path d="M4 1.500h8M4.500 0v3M11.500 0v3M0 3.500h3M1.500 4v5M0 8.500h3" stroke="#b87860"/><path d="M4.500 4.500h7v4h-7z" fill="none" stroke="#888" stroke-dasharray="1 1"/></svg>2.48 x 1.66</span>
  <span class="zoom"><button aria-label="Zoom out"></button><input type="range" aria-label="Zoom" min="0" max="100" value="54"></span>
</footer>
</div>
</body>
</html>
```
FILE: styles.css
```css
* { box-sizing: border-box; }
body { margin: 0; height: 100vh; overflow: hidden; display: flex; flex-direction: column; background: #111; color: #3d4243; font: 13px/18px "Noto Sans", "Open Sans", sans-serif; }
button, input, select { font: inherit; color: inherit; border: 0; margin: 0; padding: 0; background: none; border-radius: 0; }

.topbar { flex: none; height: 26px; display: flex; align-items: center; background: #1a1a19; color: #efefec; font-weight: 500; overflow: hidden; }
.topbar-left { flex: 0 0 50%; display: flex; align-items: center; }
.activities { width: 27px; }
.app-menu { display: flex; align-items: center; gap: 7px; }
.caret { width: 0; height: 0; border: 4px solid transparent; border-top: 5px solid #34393b; border-bottom: 0; }
.caret-light { border-top-color: #efefec; }
.clock { display: flex; align-items: center; gap: 4px; }
.dot { width: 8px; height: 8px; border-radius: 50%; background: #f4f4f2; }
.tray { margin-left: auto; margin-right: -10px; display: flex; align-items: center; gap: 14px; }
.cam { margin-right: 13px; }

.window { flex: 1; min-height: 0; display: flex; flex-direction: column; margin: 0 0 1px 2px; background: #f3f6f4; overflow: hidden; }
.titlebar { flex: none; height: 34px; display: flex; align-items: center; background: #262624; padding-right: 14px; color: #f2f2f0; }
.titlebar h1 { flex: 1; margin: 0; padding-left: 86px; text-align: center; font-size: 14px; font-weight: 600; }
.minimize { width: 8px; height: 1px; background: #ddd; margin-top: 5px; }
.menubar { flex: none; height: 23px; display: flex; align-items: center; padding-left: 7px; gap: 17px; background: #262624; color: #c9c9c5; }

.toolbar { flex: none; height: 36px; display: flex; align-items: center; overflow: hidden; }
.grip { flex: none; width: 4px; height: 22px; margin: 0 3px; background: repeating-linear-gradient(#c3c6c4 0 2px, transparent 2px 4px); }
.group { flex: none; display: flex; align-items: center; margin-left: 8px; }
.group.first, .group.flush { margin-left: 0; }
.group.near { margin-left: 5px; }
.group.far { margin-left: 10px; }
.tool { flex: none; width: 31px; height: 28px; display: flex; align-items: center; justify-content: center; }
.tool.slim { width: 29px; }
.tool svg { width: 22px; height: 22px; overflow: visible; }
.abc { font: 13px "Noto Sans", sans-serif; fill: #bfc1c0; }
.drop { flex: none; width: 10px; height: 20px; display: flex; align-items: center; justify-content: center; }
.drop::before { content: ""; border: 3px solid transparent; border-top-color: #111; border-bottom: 0; }
.drop.off::before { border-top-color: #c0c3c1; }
.select { flex: none; position: relative; height: 28px; margin-right: 1px; background: #fdfdfd; border: 1px solid #cdd0ce; border-radius: 3px; }
.select select { appearance: none; width: 100%; height: 100%; padding-left: 5px; outline: 0; }
.select::after { content: ""; position: absolute; right: 7px; top: 11px; border: 4px solid transparent; border-top: 5px solid #34393b; border-bottom: 0; pointer-events: none; }
.select.dim { background: #f3f6f4; }
.select.dim::after { border-top-color: #a9acaa; }
.gap-select { margin-left: 8px; }
.w-line { width: 89px; }
.w-area { width: 79px; }
.w-fill { width: 117px; margin-right: 0; }
.w-mode { width: 93px; }
.spin { flex: none; display: flex; width: 127px; height: 28px; background: #fdfdfd; border: 1px solid #cdd0ce; border-radius: 3px; }
.spin input { flex: 1; min-width: 0; padding-left: 1px; }
.spin button { width: 27px; border-left: 1px solid #cdd0ce; font-size: 18px; font-weight: 300; }

.formulabar { flex: none; height: 30px; display: flex; align-items: center; border-bottom: 1px solid #c7cac8; }
.namebox { flex: none; width: 146px; height: 27px; display: flex; background: #fdfdfd; border: 1px solid #cdd0ce; border-radius: 3px; }
.namebox input { flex: 1; min-width: 0; padding-left: 6px; }
.namebox button { width: 25px; display: flex; align-items: center; justify-content: center; border-left: 1px solid #cdd0ce; }
.fx { flex: none; width: 86px; padding-left: 12px; display: flex; align-items: center; gap: 10px; font-size: 18px; font-weight: 700; }
.fx small { font-size: 14px; }
.formula { flex: 1; min-width: 0; height: 24px; background: #fdfdfd; border: 1px solid #cdd0ce; border-radius: 3px; padding: 0 6px; }
.expand { flex: none; width: 20px; height: 24px; margin: 0 -16px 0 2px; background: #fdfdfd; border: 1px solid #cdd0ce; border-radius: 3px; }

.sheet { flex: 1; min-height: 0; position: relative; overflow: hidden; background: #fdfdfd; }
table { table-layout: fixed; width: 1206px; border-collapse: separate; border-spacing: 0; }
.c-head { width: 38px; } .c-a { width: 90px; } .c-b { width: 144px; } .c-c, .c-d, .c-e { width: 124px; } .c-f { width: 160px; } .c-g { width: 136px; } .c-h { width: 142px; } .c-i { width: 124px; }
th { padding: 0; height: 25px; font-weight: 400; font-size: 13px; line-height: 16px; background: #f2f5f3; border-right: 1px solid #a9acaa; border-bottom: 1px solid #c2c5c3; }
thead th { height: 19px; border-bottom-color: #a0a3a1; }
th.current { color: #fdeee8; font-weight: 700; background: linear-gradient(#e98a70 50%, #d64a25 50%); }
tbody th.current { background: linear-gradient(90deg, #e98a70 50%, #d64a25 50%); }
td { padding: 0 2px; height: 25px; vertical-align: bottom; font: 20px/22px "Liberation Sans", Arial, sans-serif; color: #161616; border-right: 1px solid #c2c5c3; border-bottom: 1px solid #c2c5c3; }
.plus td, .plus th { height: 26px; }
.two td { height: 48px; }
.three td { height: 70px; }
.num { text-align: right; }
.spill { white-space: nowrap; overflow: visible; }
.blue { background: #739dc8; border-color: #739dc8; }
.green { background: #84e81f; border-right-color: #84e81f; }
.kb { border-bottom-color: #000; }
.kr { border-right-color: #000; }
.selected { position: relative; outline: 2px solid #000; outline-offset: -1px; }
.selected::after { content: ""; position: absolute; right: -3px; bottom: -3px; width: 5px; height: 5px; background: #000; }
.drawings { position: absolute; left: 130px; top: 245px; }
.axes { fill: none; stroke: #222; stroke-width: 1.2px; }
.points { fill: none; stroke: #222; stroke-width: 1.2px; }
.paper { font: 12px "Liberation Serif", "Times New Roman", serif; fill: #111; stroke: #111; stroke-width: .4px; }
.freq { font-size: 14px; }
.wave { font-weight: 700; stroke: none; }
.sub { font-size: 8px; }
.measured { fill: none; stroke: #222; stroke-width: 1.3px; }
.fitted { fill: none; stroke: #3a33a0; stroke-width: 1.3px; }
.plot { font: 11px "Liberation Sans", Arial, sans-serif; fill: #222; }
.axis-title { font-size: 14px; }
.sup { font-size: 9px; }
.band { font-size: 9px; }
.handles { fill: #4fa3d9; stroke: #2f79ad; }

.hscroll { flex: none; height: 10px; padding: 2px 0 2px 4px; background: #dde1df; }
.hscroll i { display: block; width: 44%; height: 6px; border-radius: 3px; background: #7b807d; }
.tabs { flex: none; height: 20px; display: flex; border-bottom: 1px solid #c7cac8; padding-bottom: 1px; }
.tab-nav { flex: none; width: 110px; display: flex; align-items: center; padding-left: 6px; }
.tab-nav button { width: 18px; display: flex; justify-content: center; }
.tab-nav svg { width: 10px; height: 10px; fill: #2e3335; }
.tab-nav .add { width: 34px; }
.tab { flex: none; padding: 0 12px 0 13px; font-size: 11px; line-height: 17px; border-right: 1px solid #b5b8b6; border-bottom: 1px solid #c7cac8; }
.tab.active { background: #fdfdfd; font-weight: 700; }
.status { flex: none; height: 19px; display: flex; align-items: center; font-size: 12px; overflow: hidden; }
.status span { flex: none; display: flex; align-items: center; }
.s-style { width: 132px; margin-left: 345px; }
.s-lang { width: 138px; }
.s-mode { width: 84px; gap: 14px; }
.s-pos { width: 168px; gap: 6px; padding-left: 1px; }
.s-size { width: 177px; gap: 6px; padding-left: 2px; }
.status .zoom { flex: 1; gap: 6px; }
.zoom button { width: 8px; height: 2px; background: #b9bcba; }
.zoom input { appearance: none; flex: none; width: 106px; height: 2px; background: #8c908e; }
.zoom input::-webkit-slider-thumb { appearance: none; width: 10px; height: 10px; border-radius: 50%; background: #fdfdfd; border: 1px solid #888; }
```
